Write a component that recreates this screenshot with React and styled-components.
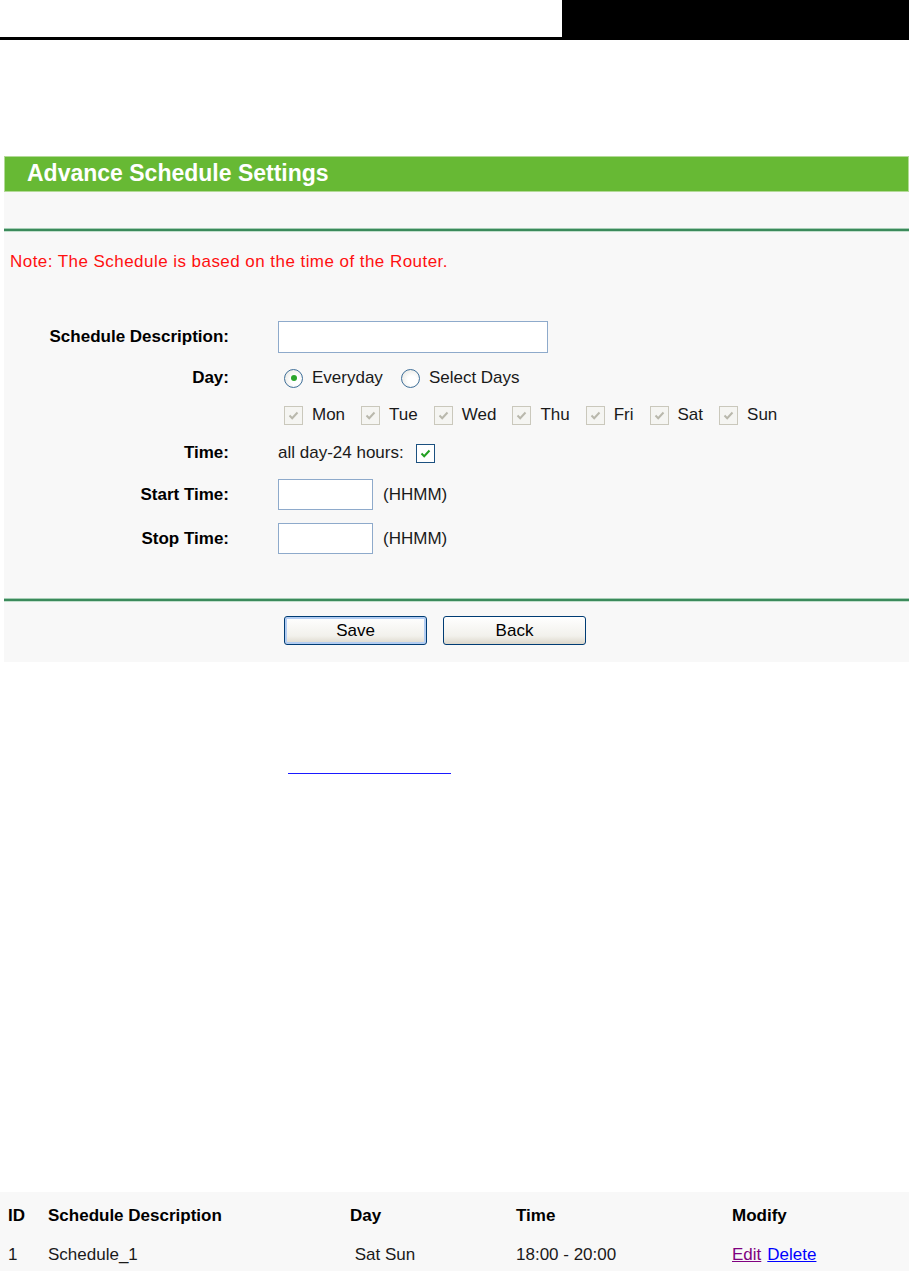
import React from "react";
import styled, { createGlobalStyle } from "styled-components";

const Global = createGlobalStyle`
  html, body { margin: 0; padding: 0; background: #ffffff; }
  body { font-family: "Liberation Sans", Arial, sans-serif; color: #1a1a1a; }
`;

const Page = styled.div`
  width: 909px;
  display: flex;
  flex-direction: column;
`;

const TopBar = styled.div`
  display: flex;
  height: 40px;
`;

const TopBarFill = styled.div`
  flex: 1;
  border-bottom: 3px solid #000;
`;

const TopBarBlock = styled.div`
  width: 347px;
  background: #000;
`;

const Panel = styled.section`
  margin: 116px 0 0 4px;
  width: 905px;
  background: #f8f8f8;
  padding-bottom: 17px;
`;

const TitleBar = styled.h1`
  margin: 0;
  box-sizing: border-box;
  height: 36px;
  border: 1px solid #b3da98;
  background: #67b934;
  color: #fff;
  font-size: 23px;
  font-weight: bold;
  line-height: 33px;
  padding-left: 22px;
`;

const Rule = styled.div`
  height: 2px;
  margin-top: ${(p) => p.$top}px;
  background: #3b8a5b;
  box-shadow: 0 -1px 0 #a7cfb6, 0 1px 0 #c3e0cd;
`;

const Note = styled.p`
  margin: 21px 0 0 6px;
  font-size: 17px;
  line-height: 20px;
  letter-spacing: 0.45px;
  color: #ff1010;
`;

const Form = styled.div`
  margin-top: 49px;
  display: flex;
  flex-direction: column;
  gap: 13px;
`;

const Row = styled.div`
  display: grid;
  grid-template-columns: 225px 1fr;
  column-gap: 49px;
  align-items: center;
  height: ${(p) => p.$h}px;
`;

const Label = styled.div`
  text-align: right;
  font-weight: bold;
  font-size: 17px;
  color: #000;
`;

const Value = styled.div`
  display: flex;
  align-items: center;
  font-size: 17px;
`;

const TextInput = styled.div`
  box-sizing: border-box;
  width: ${(p) => p.$w}px;
  height: ${(p) => p.$h}px;
  border: 1px solid #8eaacb;
  background: #fff;
`;

const Hint = styled.span`
  margin-left: 10px;
  font-size: 17px;
`;

const Choice = styled.label`
  display: flex;
  align-items: center;
  margin-left: ${(p) => p.$ml ?? 0}px;
  gap: ${(p) => p.$gap ?? 9}px;
  font-size: 17px;
`;

const RadioDot = styled.span`
  box-sizing: border-box;
  width: 19px;
  height: 19px;
  border-radius: 50%;
  border: 1.5px solid #3f6f99;
  background: radial-gradient(circle at 60% 60%, #ffffff 30%, #e2e2dc 100%);
  display: flex;
  align-items: center;
  justify-content: center;
  &::after {
    content: "";
    width: 6px;
    height: 6px;
    border-radius: 50%;
    background: ${(p) => (p.$on ? "#2aa52a" : "transparent")};
  }
`;

const Box = styled.span`
  box-sizing: border-box;
  width: 19px;
  height: 19px;
  display: flex;
  align-items: center;
  justify-content: center;
  border: 1px solid ${(p) => (p.$disabled ? "#cac8bc" : "#1c5180")};
  background: ${(p) => (p.$disabled ? "#f5f5f2" : "#ffffff")};
`;

const DayList = styled.div`
  display: flex;
  align-items: center;
  margin-left: 6px;
  gap: 16px;
`;

const ButtonRow = styled.div`
  margin-top: 15px;
  padding-left: 280px;
  display: flex;
  gap: 16px;
`;

const Button = styled.button`
  box-sizing: border-box;
  width: 143px;
  height: 29px;
  border: 1px solid #003c74;
  border-radius: 3px;
  background: linear-gradient(#ffffff, #f2f1ec 70%, #dcd7cb);
  font-family: "Liberation Sans", Arial, sans-serif;
  font-size: 17px;
  color: #000;
  padding: 0;
  box-shadow: ${(p) => (p.$primary ? "inset 0 0 0 2px #b3cdf2" : "none")};
`;

const LinkLine = styled.a`
  display: block;
  margin: 111px 0 0 288px;
  width: 163px;
  height: 0;
  border-bottom: 1px solid #1a1aff;
`;

const Table = styled.div`
  margin-top: 418px;
  background: #f8f8f8;
  padding-top: 4px;
  height: 79px;
  box-sizing: border-box;
`;

const TRow = styled.div`
  display: grid;
  grid-template-columns: 40px 302px 166px 216px 1fr;
  padding-left: 8px;
  padding-top: ${(p) => (p.$head ? 0 : 3)}px;
  box-sizing: border-box;
  align-items: center;
  height: ${(p) => p.$h}px;
  font-size: 17px;
  font-weight: ${(p) => (p.$head ? "bold" : "normal")};
  color: ${(p) => (p.$head ? "#000" : "#1a1a1a")};
`;

const Links = styled.div`
  display: flex;
  gap: 6px;
`;

const TLink = styled.a`
  color: ${(p) => (p.$visited ? "#800080" : "#0000ff")};
  text-decoration: underline;
`;

function Check({ color }) {
  return (
    <svg width="13" height="13" viewBox="0 0 13 13">
      <path d="M2.5 6.5 L5.2 9.2 L10.5 3.5" fill="none" stroke={color} strokeWidth="2" />
    </svg>
  );
}

function CheckBox({ disabled }) {
  return (
    <Box $disabled={disabled}>
      <Check color={disabled ? "#b9b8ac" : "#22a022"} />
    </Box>
  );
}

const days = ["Mon", "Tue", "Wed", "Thu", "Fri", "Sat", "Sun"];

export default function App() {
  return (
    <Page>
      <Global />
      <TopBar>
        <TopBarFill />
        <TopBarBlock />
      </TopBar>

      <Panel>
        <TitleBar>Advance Schedule Settings</TitleBar>
        <Rule $top={37} />
        <Note>Note: The Schedule is based on the time of the Router.</Note>

        <Form>
          <Row $h={32}>
            <Label>Schedule Description:</Label>
            <Value>
              <TextInput $w={270} $h={32} />
            </Value>
          </Row>
          <Row $h={24}>
            <Label>Day:</Label>
            <Value>
              <Choice $ml={6}>
                <RadioDot $on />
                Everyday
              </Choice>
              <Choice $ml={18}>
                <RadioDot />
                Select Days
              </Choice>
            </Value>
          </Row>
          <Row $h={24}>
            <div />
            <DayList>
              {days.map((d) => (
                <Choice key={d}>
                  <CheckBox disabled />
                  {d}
                </Choice>
              ))}
            </DayList>
          </Row>
          <Row $h={26}>
            <Label>Time:</Label>
            <Value>
              <Choice $gap={12}>
                all day-24 hours:
                <CheckBox />
              </Choice>
            </Value>
          </Row>
          <Row $h={31}>
            <Label>Start Time:</Label>
            <Value>
              <TextInput $w={95} $h={31} />
              <Hint>(HHMM)</Hint>
            </Value>
          </Row>
          <Row $h={31}>
            <Label>Stop Time:</Label>
            <Value>
              <TextInput $w={95} $h={31} />
              <Hint>(HHMM)</Hint>
            </Value>
          </Row>
        </Form>

        <Rule $top={45} />
        <ButtonRow>
          <Button $primary>Save</Button>
          <Button>Back</Button>
        </ButtonRow>
      </Panel>

      <LinkLine />

      <Table>
        <TRow $head $h={39}>
          <span>ID</span>
          <span>Schedule Description</span>
          <span>Day</span>
          <span>Time</span>
          <span>Modify</span>
        </TRow>
        <TRow $h={36}>
          <span>1</span>
          <span>Schedule_1</span>
          <span>{"\u00a0Sat Sun"}</span>
          <span>18:00 - 20:00</span>
          <Links>
            <TLink $visited>Edit</TLink>
            <TLink>Delete</TLink>
          </Links>
        </TRow>
      </Table>
    </Page>
  );
}
